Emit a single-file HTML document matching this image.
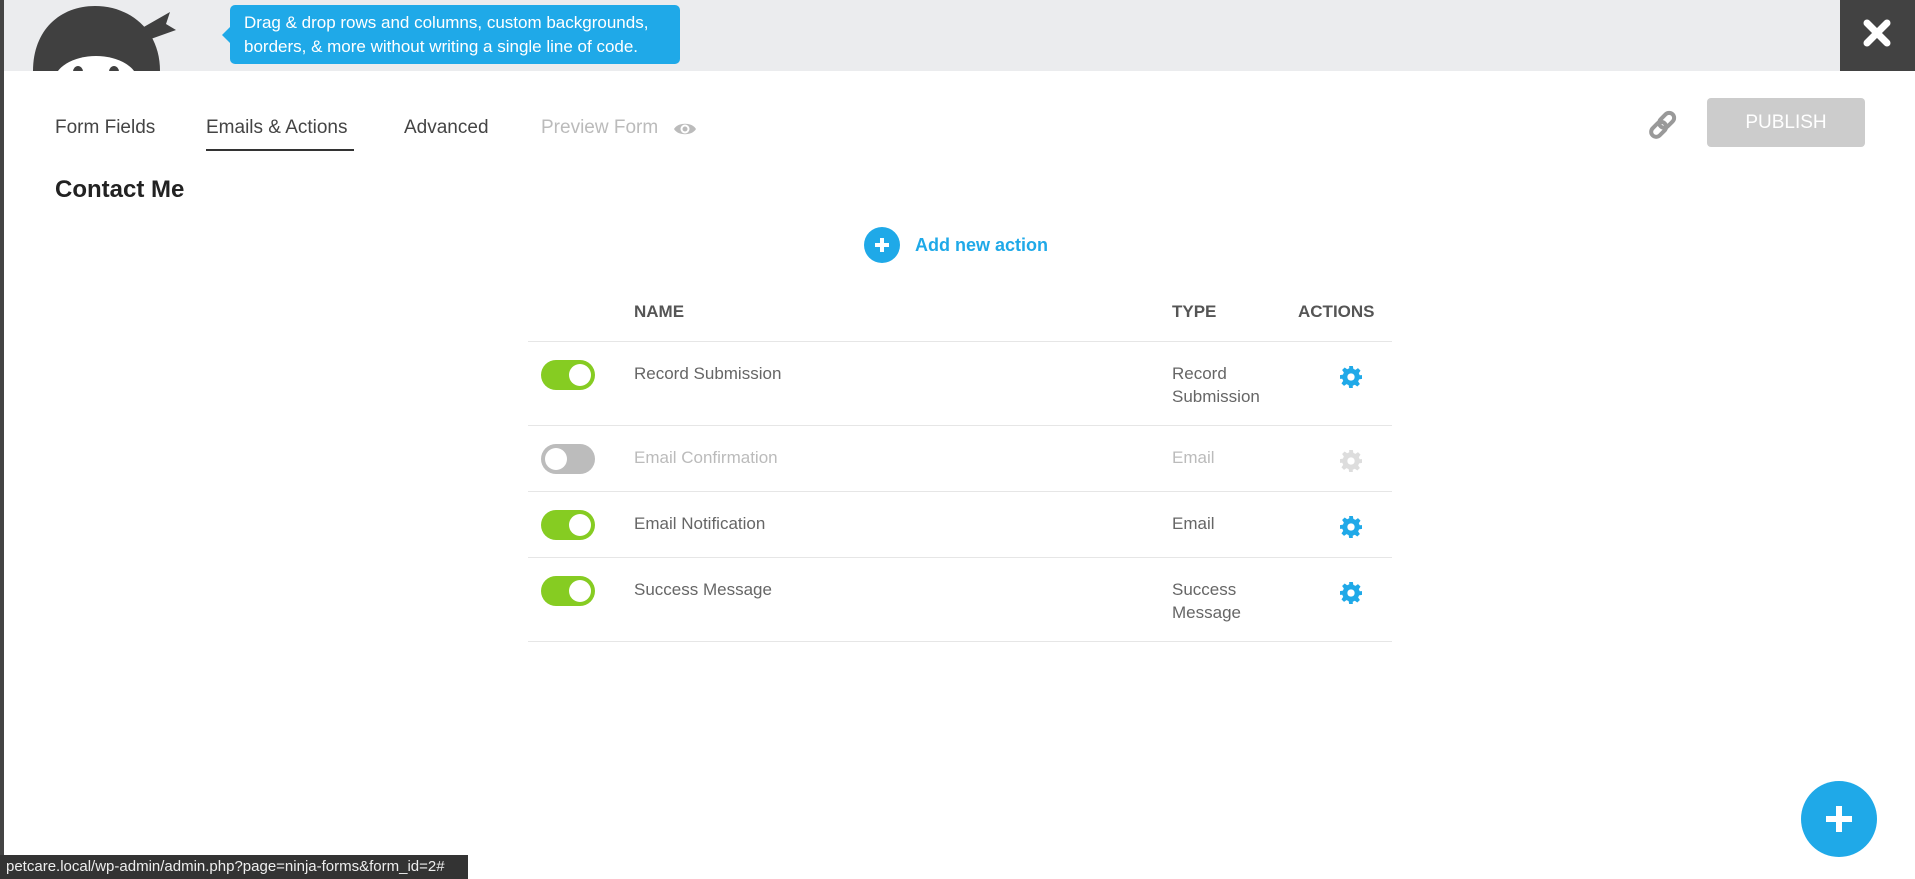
<!DOCTYPE html>
<html><head><meta charset="utf-8"><style>
*{margin:0;padding:0;box-sizing:border-box}
body{width:1915px;height:879px;overflow:hidden;background:#fff;font-family:"Liberation Sans",sans-serif;position:relative;color:#444}
.abs{position:absolute}
.top{left:0;top:0;width:1915px;height:71px;background:#ebecee}
.lb{left:0;top:0;width:4px;height:879px;background:#444;z-index:5}
.close{left:1840px;top:0;width:75px;height:71px;background:#424242}
.tip{left:230px;top:5px;width:450px;height:59px;background:#1fa9e8;border-radius:5px;color:#fff;font-size:17px;line-height:24px;padding:6px 0 0 14px;white-space:nowrap}
.tip:before{content:"";position:absolute;left:-8px;top:22px;border:8px solid transparent;border-left:0;border-right-color:#1fa9e8}
.tab{top:117px;font-size:19px;color:#444;white-space:nowrap}
.row{left:528px;width:864px;border-bottom:1px solid #e6e6e6}
.cell{position:absolute;font-size:17px;line-height:23px;color:#666}
.tg{position:absolute;left:13px;width:54px;height:30px;border-radius:15px;background:#86cc22}
.tg:after{content:"";position:absolute;right:4px;top:4px;width:22px;height:22px;border-radius:50%;background:#fff}
.tg.off{background:#bcbcbc}.tg.off:after{right:auto;left:4px}
.th{position:absolute;top:302px;font-size:17px;font-weight:bold;color:#555}
.gear{position:absolute;left:812px;top:24px}
</style></head><body>
<svg width="0" height="0" style="position:absolute"><defs><g id="g"><path d="M10 0h4l.6 3.2 2.3 1 2.7-1.9 2.8 2.8-1.9 2.7 1 2.3L24 10v4l-3.2.6-1 2.3 1.9 2.7-2.8 2.8-2.7-1.9-2.3 1L14 24h-4l-.6-3.2-2.3-1-2.7 1.9-2.8-2.8 1.9-2.7-1-2.3L0 14v-4l3.2-.6 1-2.3-1.9-2.7 2.8-2.8 2.7 1.9 2.3-1z"/></g></defs></svg>
<div class="abs top"></div>
<div class="abs lb"></div>
<svg class="abs" style="left:30px;top:0" width="150" height="71" viewBox="0 0 150 71">
<path d="M3 71 C3 30 30 6 65 6 C100 6 130 30 130 71Z" fill="#404040"/>
<path d="M112 28 L140 12 L136 24 L146 30 L118 40Z" fill="#404040"/>
<ellipse cx="66" cy="82" rx="42" ry="26" fill="#fff"/>
<ellipse cx="48" cy="72" rx="5" ry="6" fill="#404040"/>
<ellipse cx="84" cy="72" rx="5" ry="6" fill="#404040"/>
</svg>
<div class="abs tip">Drag &amp; drop rows and columns, custom backgrounds,<br>borders, &amp; more without writing a single line of code.</div>
<div class="abs close"><svg width="75" height="71"><path d="M27 23 L47 43 M47 23 L27 43" stroke="#fff" stroke-width="7" stroke-linecap="round"/></svg></div>

<div class="abs tab" style="left:55px">Form Fields</div>
<div class="abs tab" style="left:206px">Emails &amp; Actions</div>
<div class="abs" style="left:206px;top:149px;width:148px;height:2px;background:#333"></div>
<div class="abs tab" style="left:404px">Advanced</div>
<div class="abs tab" style="left:541px;color:#bbb">Preview Form</div>
<svg class="abs" style="left:673px;top:120px" width="24" height="18" viewBox="0 0 24 18"><path d="M1 9 C5 2 19 2 23 9 C19 16 5 16 1 9Z" fill="#bbb"/><circle cx="12" cy="9" r="4.5" fill="#fff"/><circle cx="12" cy="9" r="2.5" fill="#bbb"/></svg>
<div class="abs" style="left:55px;top:176px;font-size:24px;font-weight:bold;color:#222">Contact Me</div>

<svg class="abs" style="left:1647px;top:109px" width="32" height="32" viewBox="0 0 32 32"><g fill="none" stroke="#999" stroke-width="4"><rect x="15" y="3" width="10" height="17" rx="5" transform="rotate(45 20 11)"/><rect x="7" y="12" width="10" height="17" rx="5" transform="rotate(45 12 20)"/></g></svg>
<div class="abs" style="left:1707px;top:98px;width:158px;height:49px;background:#ccc;border-radius:4px;color:#fff;font-size:19px;text-align:center;line-height:49px">PUBLISH</div>

<div class="abs" style="left:864px;top:227px;width:36px;height:36px;border-radius:50%;background:#1fa9e8"><svg width="36" height="36"><path d="M18 11V25M11 18H25" stroke="#fff" stroke-width="4"/></svg></div>
<div class="abs" style="left:915px;top:235px;font-size:18px;font-weight:bold;color:#1fa9e8">Add new action</div>

<div class="th" style="left:634px">NAME</div>
<div class="th" style="left:1172px">TYPE</div>
<div class="th" style="left:1298px">ACTIONS</div>
<div class="abs row" style="top:341px;height:1px"></div>

<div class="abs row" style="top:342px;height:84px">
<div class="tg" style="top:18px"></div>
<div class="cell" style="left:106px;top:20px">Record Submission</div>
<div class="cell" style="left:644px;top:20px">Record<br>Submission</div>
<svg class="gear" width="22" height="22" viewBox="0 0 24 24"><use href="#g" fill="#1fa9e8"/><circle cx="12" cy="12" r="4" fill="#fff"/></svg>
</div>
<div class="abs row" style="top:426px;height:66px">
<div class="tg off" style="top:18px"></div>
<div class="cell" style="left:106px;top:20px;color:#bbb">Email Confirmation</div>
<div class="cell" style="left:644px;top:20px;color:#bbb">Email</div>
<svg class="gear" width="22" height="22" viewBox="0 0 24 24"><use href="#g" fill="#ddd"/><circle cx="12" cy="12" r="4" fill="#fff"/></svg>
</div>
<div class="abs row" style="top:492px;height:66px">
<div class="tg" style="top:18px"></div>
<div class="cell" style="left:106px;top:20px">Email Notification</div>
<div class="cell" style="left:644px;top:20px">Email</div>
<svg class="gear" width="22" height="22" viewBox="0 0 24 24"><use href="#g" fill="#1fa9e8"/><circle cx="12" cy="12" r="4" fill="#fff"/></svg>
</div>
<div class="abs row" style="top:558px;height:84px">
<div class="tg" style="top:18px"></div>
<div class="cell" style="left:106px;top:20px">Success Message</div>
<div class="cell" style="left:644px;top:20px">Success<br>Message</div>
<svg class="gear" width="22" height="22" viewBox="0 0 24 24"><use href="#g" fill="#1fa9e8"/><circle cx="12" cy="12" r="4" fill="#fff"/></svg>
</div>

<div class="abs" style="left:1801px;top:781px;width:76px;height:76px;border-radius:50%;background:#1fa9e8"><svg width="76" height="76"><path d="M38 25V51M25 38H51" stroke="#fff" stroke-width="6"/></svg></div>
<div class="abs" style="left:0;top:855px;width:468px;height:24px;background:#333;color:#eee;font-size:15px;line-height:24px;padding-left:6px;z-index:6">petcare.local/wp-admin/admin.php?page=ninja-forms&amp;form_id=2#</div>
</body></html>
